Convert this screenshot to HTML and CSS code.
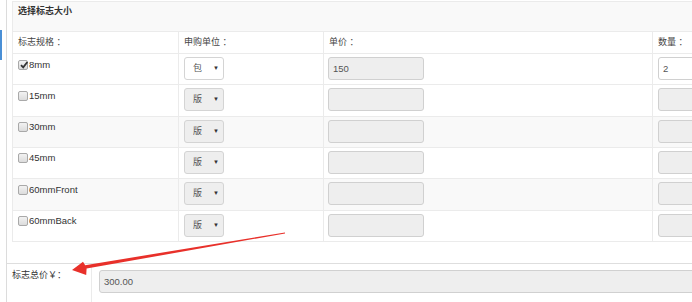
FILE: index.html
```html
<!DOCTYPE html>
<html lang="zh-CN">
<head>
    <meta charset="UTF-8">
    <meta name="viewport" content="width=device-width, initial-scale=1.0">
    <title>选择标志大小</title>
    <link rel="stylesheet" href="styles.css">
</head>
<body>
    <div class="layout">
        <aside class="side">
            <span class="side-mark"></span>
        </aside>

        <main class="content">
            <div class="size-panel">
                <table class="size-table">
                    <colgroup>
                        <col class="col-spec">
                        <col class="col-unit">
                        <col class="col-price">
                        <col class="col-qty">
                    </colgroup>
                    <tr class="caption-row">
                        <td colspan="4">选择标志大小</td>
                    </tr>
                    <tr class="head-row">
                        <td>标志规格 ：</td>
                        <td>申购单位 ：</td>
                        <td>单价 ：</td>
                        <td>数量 ：</td>
                    </tr>
                    <tr>
                        <td><label class="spec"><span class="chk checked"><svg viewBox="0 0 10 10" width="10" height="10"><path d="M2 5.2 L4.2 7.4 L8.4 2" fill="none" stroke="#333" stroke-width="1.8"/></svg></span>8mm</label></td>
                        <td><span class="sel"><select><option>包</option></select></span></td>
                        <td><input class="field price" type="text" value="150" disabled></td>
                        <td><input class="field qty" type="text" value="2"></td>
                    </tr>
                    <tr>
                        <td><label class="spec"><span class="chk"></span>15mm</label></td>
                        <td><span class="sel"><select disabled><option>版</option></select></span></td>
                        <td><input class="field price" type="text" disabled></td>
                        <td><input class="field qty" type="text" disabled></td>
                    </tr>
                    <tr class="striped">
                        <td><label class="spec"><span class="chk"></span>30mm</label></td>
                        <td><span class="sel"><select disabled><option>版</option></select></span></td>
                        <td><input class="field price" type="text" disabled></td>
                        <td><input class="field qty" type="text" disabled></td>
                    </tr>
                    <tr>
                        <td><label class="spec"><span class="chk"></span>45mm</label></td>
                        <td><span class="sel"><select disabled><option>版</option></select></span></td>
                        <td><input class="field price" type="text" disabled></td>
                        <td><input class="field qty" type="text" disabled></td>
                    </tr>
                    <tr class="striped">
                        <td><label class="spec"><span class="chk"></span>60mmFront</label></td>
                        <td><span class="sel"><select disabled><option>版</option></select></span></td>
                        <td><input class="field price" type="text" disabled></td>
                        <td><input class="field qty" type="text" disabled></td>
                    </tr>
                    <tr>
                        <td><label class="spec"><span class="chk"></span>60mmBack</label></td>
                        <td><span class="sel"><select disabled><option>版</option></select></span></td>
                        <td><input class="field price" type="text" disabled></td>
                        <td><input class="field qty" type="text" disabled></td>
                    </tr>
                </table>
            </div>

            <div class="total-row">
                <div class="total-label">标志总价￥：</div>
                <div class="total-field">
                    <input class="field wide" type="text" value="300.00" disabled>
                </div>
            </div>
        </main>
    </div>

    <!-- annotation arrow -->
    <svg class="arrow" width="692" height="302" viewBox="0 0 692 302">
        <polygon points="285,232.4 85.2,265.2 83,261.8 72,270 86.2,275 86.6,268.6 285,233.4" fill="#e8302a"/>
    </svg>
</body>
</html>
```

FILE: styles.css
```css
body {
    margin: 0;
    font-family: "Liberation Sans", "Noto Sans CJK SC", sans-serif;
    font-size: 9px;
    line-height: 13px;
    color: #333;
    background: white;
    width: 692px;
    height: 302px;
    overflow: hidden;
    position: relative;
}

.layout {
    display: flex;
    height: 302px;
}

.side {
    width: 6px;
    flex: none;
    border-right: 1px solid #dcdcdc;
}

.side-mark {
    display: block;
    width: 2px;
    height: 30px;
    margin-top: 30px;
    background: #4a8fd6;
}

.content {
    flex: 1;
    min-width: 0;
}

.size-panel {
    margin: 1px 0 0 5px;
}

.size-table {
    border-collapse: collapse;
    width: 760px;
    table-layout: fixed;
}

.col-spec { width: 166px; }
.col-unit { width: 145px; }
.col-price { width: 329px; }
.col-qty { width: 120px; }

.size-table td {
    border: 1px solid #ebebeb;
    padding: 3px 5px 4.33px;
    vertical-align: top;
}

.caption-row td {
    background: #f9f9f9;
    font-weight: bold;
    padding: 3px 5px 13px;
}

.head-row td {
    padding: 4px 5px;
    color: #444;
}

.striped td {
    background: #f9f9f9;
}

.spec {
    display: inline-flex;
    align-items: flex-start;
    padding-top: 0.5px;
    font-size: 9.5px;
}

.chk {
    width: 8px;
    height: 8px;
    margin: 2px 1px 0 0;
    border: 1px solid #a9a9a9;
    border-radius: 2px;
    background: linear-gradient(#f2f2f2, #dcdcdc);
    position: relative;
}

.chk svg {
    position: absolute;
    left: 0;
    top: -1px;
}

.sel {
    display: inline-block;
    position: relative;
}

.sel::after {
    content: "▼";
    position: absolute;
    right: 5px;
    top: 7px;
    font-size: 6px;
    line-height: 8px;
    color: #333;
}

.sel select {
    appearance: none;
    -webkit-appearance: none;
    width: 40px;
    height: 23px;
    margin: 0;
    padding: 0 0 0 8px;
    border: 1px solid #d4d4d4;
    border-radius: 3px;
    background: white;
    font: inherit;
    color: #555;
    display: block;
}

.sel select:disabled {
    background: #eee;
    opacity: 1;
}

.field {
    box-sizing: border-box;
    width: 96px;
    height: 23px;
    margin: 0;
    padding: 0 4px;
    border: 1px solid #d0d0d0;
    border-radius: 3px;
    background: white;
    font-family: inherit;
    font-size: 9.5px;
    color: #555;
    display: block;
}

.field:disabled {
    background: #eee;
    -webkit-text-fill-color: #555;
    opacity: 1;
}

.price {
    margin-left: -1px;
}

.qty {
    width: 100px;
}

.total-row {
    display: flex;
    margin-top: 21px;
    border-top: 1px solid #dedede;
}

.total-label {
    width: 79px;
    flex: none;
    padding: 5px 0 0 5px;
    border-right: 1px solid #ebebeb;
    height: 40px;
}

.total-field {
    flex: 1;
    padding: 6px 0 0 7px;
}

.wide {
    width: 620px;
}

.arrow {
    position: absolute;
    left: 0;
    top: 0;
    pointer-events: none;
}
```
